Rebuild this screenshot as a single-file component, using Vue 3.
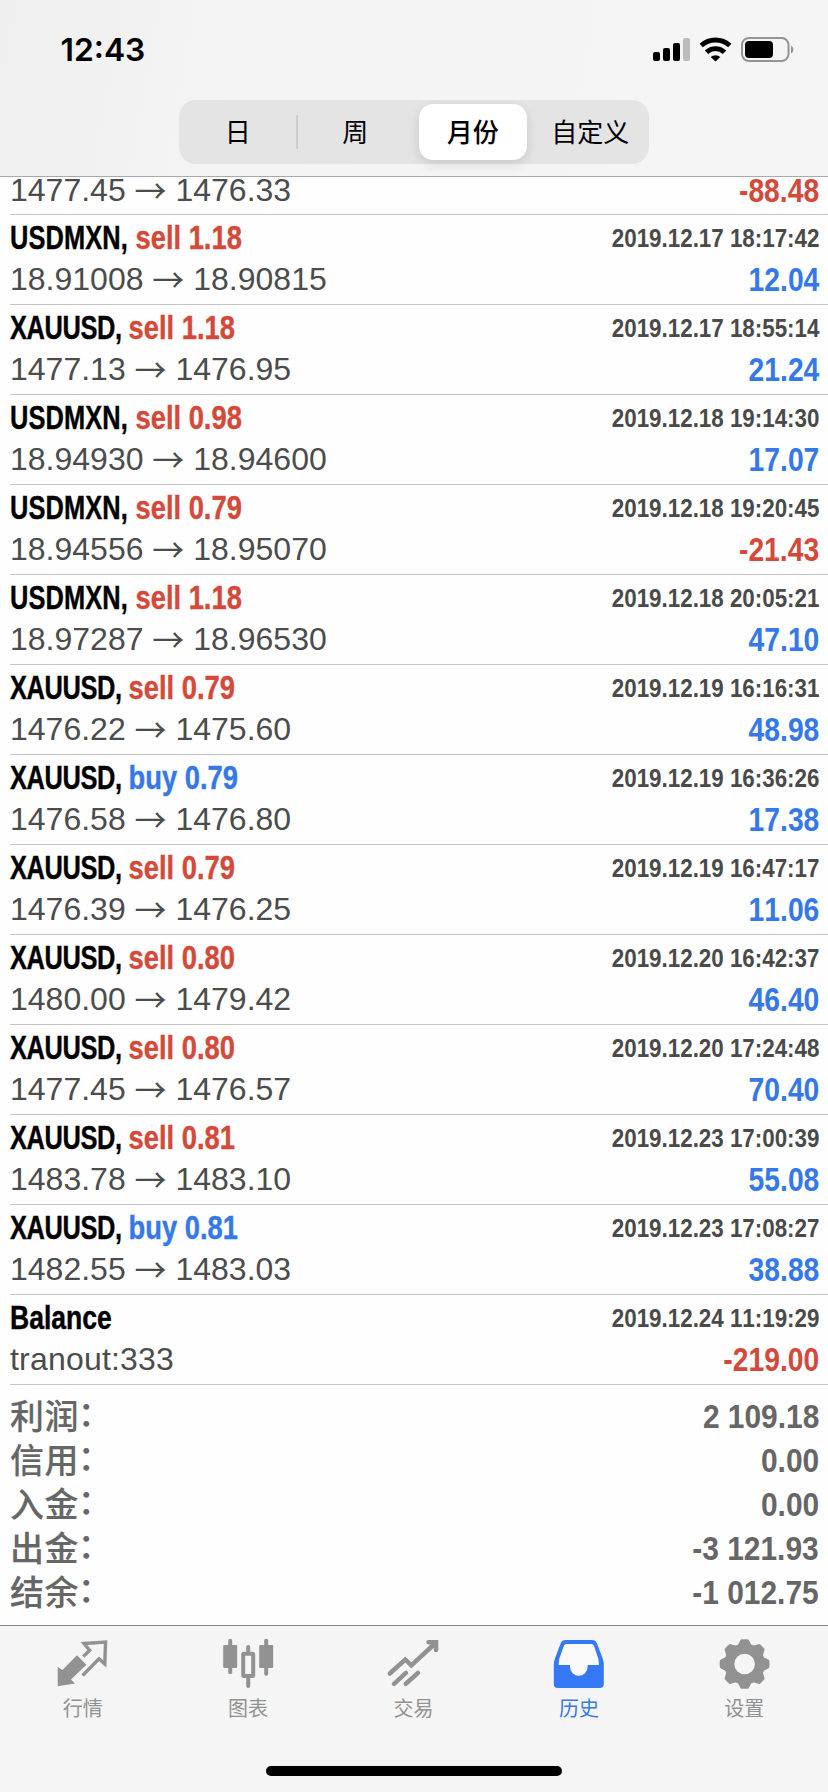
<script setup>
const segments = [
  { label: '日', divider: true },
  { label: '周' },
  { label: '月份', active: true },
  { label: '自定义' }
]

const deals = [
  { symbol: 'USDMXN', side: 'sell', volume: '1.18', open: '18.91008', close: '18.90815', time: '2019.12.17 18:17:42', profit: '12.04' },
  { symbol: 'XAUUSD', side: 'sell', volume: '1.18', open: '1477.13', close: '1476.95', time: '2019.12.17 18:55:14', profit: '21.24' },
  { symbol: 'USDMXN', side: 'sell', volume: '0.98', open: '18.94930', close: '18.94600', time: '2019.12.18 19:14:30', profit: '17.07' },
  { symbol: 'USDMXN', side: 'sell', volume: '0.79', open: '18.94556', close: '18.95070', time: '2019.12.18 19:20:45', profit: '-21.43' },
  { symbol: 'USDMXN', side: 'sell', volume: '1.18', open: '18.97287', close: '18.96530', time: '2019.12.18 20:05:21', profit: '47.10' },
  { symbol: 'XAUUSD', side: 'sell', volume: '0.79', open: '1476.22', close: '1475.60', time: '2019.12.19 16:16:31', profit: '48.98' },
  { symbol: 'XAUUSD', side: 'buy', volume: '0.79', open: '1476.58', close: '1476.80', time: '2019.12.19 16:36:26', profit: '17.38' },
  { symbol: 'XAUUSD', side: 'sell', volume: '0.79', open: '1476.39', close: '1476.25', time: '2019.12.19 16:47:17', profit: '11.06' },
  { symbol: 'XAUUSD', side: 'sell', volume: '0.80', open: '1480.00', close: '1479.42', time: '2019.12.20 16:42:37', profit: '46.40' },
  { symbol: 'XAUUSD', side: 'sell', volume: '0.80', open: '1477.45', close: '1476.57', time: '2019.12.20 17:24:48', profit: '70.40' },
  { symbol: 'XAUUSD', side: 'sell', volume: '0.81', open: '1483.78', close: '1483.10', time: '2019.12.23 17:00:39', profit: '55.08' },
  { symbol: 'XAUUSD', side: 'buy', volume: '0.81', open: '1482.55', close: '1483.03', time: '2019.12.23 17:08:27', profit: '38.88' }
]

const totals = [
  ['利润', '2 109.18'],
  ['信用', '0.00'],
  ['入金', '0.00'],
  ['出金', '-3 121.93'],
  ['结余', '-1 012.75']
]

const sign = (v) => (v.startsWith('-') ? 'red' : 'blue')

// Eight-tooth gear outline: each tooth is a valley-tip-tip-valley run.
const gear = Array.from({ length: 8 }, (_, i) =>
  [[-17, 18.8], [-6.5, 23.3], [6.5, 23.3], [17, 18.8]].map(([offset, r]) => {
    const a = ((i * 45 + offset) * Math.PI) / 180
    return `${(28.6 + r * Math.cos(a)).toFixed(2)},${(26 + r * Math.sin(a)).toFixed(2)}`
  }).join(' ')
).join(' ')
</script>

<template>
  <div class="screen">
    <header class="top">
      <div class="status">
        <span class="clock">12:43</span>
        <svg class="status-icons" width="144" height="26" viewBox="0 0 144 26">
          <rect x="1" y="15" width="7" height="9" rx="2" />
          <rect x="11" y="11" width="7" height="13" rx="2" />
          <rect x="21" y="6" width="7" height="18" rx="2" />
          <rect x="31" y="1" width="7" height="23" rx="2" fill="#bcbcbc" />
          <g fill="none" stroke="#000" stroke-width="4.8">
            <path d="M49.2 8.600a21 21 0 0 1 28.600 0" />
            <path d="M54.5 15.200a13 13 0 0 1 18 0" />
          </g>
          <path d="M58.7 20a7.200 7.200 0 0 1 9.600 0L63.500 24.500z" />
          <rect x="90" y="1" width="46.500" height="23" rx="7" fill="none" stroke="#949494" stroke-width="2" />
          <rect x="93" y="4" width="28" height="17" rx="4" />
          <path d="M139 8.500a4.500 4.500 0 0 1 0 8z" fill="#949494" />
        </svg>
      </div>
      <nav class="segmented">
        <div v-for="s in segments" :key="s.label" class="segment" :class="{ active: s.active, divider: s.divider }">
          <span>{{ s.label }}</span>
        </div>
      </nav>
    </header>

    <main class="list">
      <section class="deal partial">
        <div class="line second">
          <span class="price">1477.45 <i class="arrow">→</i> 1476.33</span>
          <span class="profit red">-88.48</span>
        </div>
      </section>
      <section v-for="d in deals" :key="d.time" class="deal">
        <div class="line first">
          <span class="title"><span :class="d.symbol.toLowerCase()">{{ d.symbol }}, </span><span class="side" :class="d.side === 'sell' ? 'red' : 'blue'">{{ d.side }} {{ d.volume }}</span></span>
          <span class="time">{{ d.time }}</span>
        </div>
        <div class="line second">
          <span class="price">{{ d.open }} <i class="arrow">→</i> {{ d.close }}</span>
          <span class="profit" :class="sign(d.profit)">{{ d.profit }}</span>
        </div>
      </section>
      <section class="deal">
        <div class="line first">
          <span class="title balance">Balance</span>
          <span class="time">2019.12.24 11:19:29</span>
        </div>
        <div class="line second">
          <span class="price note">tranout:333</span>
          <span class="profit red">-219.00</span>
        </div>
      </section>
      <section class="totals">
        <div v-for="[label, value] in totals" :key="label" class="total">
          <span class="label">{{ label }}<span class="colon">：</span></span>
          <span class="value">{{ value }}</span>
        </div>
      </section>
    </main>

    <footer class="tabs">
      <div class="tab">
        <svg width="56" height="52" viewBox="0 0 56 52">
          <path d="M2.700 28.700V48.300L20 45.500L16 41.500L31.400 26.700L22 17.300L7.400 32z" fill="currentColor" />
          <path d="M28.300 18.500L34.700 12.300L29 5.500L50.500 4L49.800 26L44 20.800L27.600 37.500" fill="none" stroke="currentColor" stroke-width="3.400" />
        </svg>
        <span>行情</span>
      </div>
      <div class="tab">
        <svg width="56" height="52" viewBox="0 0 56 52" fill="currentColor">
          <rect x="3.200" y="7" width="14" height="23" rx="1" />
          <rect x="8.200" y="0.700" width="4" height="35.600" rx="2" />
          <rect x="39.200" y="7" width="14" height="23" rx="1" />
          <rect x="44.200" y="0.700" width="4" height="37" rx="2" />
          <rect x="23.200" y="15.700" width="10" height="22.300" rx="0.500" fill="none" stroke="currentColor" stroke-width="4" />
          <rect x="26.200" y="7" width="4" height="8" rx="2" />
          <rect x="26.200" y="38" width="4" height="12" rx="2" />
        </svg>
        <span>图表</span>
      </div>
      <div class="tab">
        <svg width="56" height="52" viewBox="0 0 56 52" fill="none" stroke="currentColor" stroke-width="4.500" stroke-linecap="round">
          <path d="M4.800 35.500L20.300 21.500L26.300 27.300L50 5.500" />
          <path d="M43.500 4.300H51V12" />
          <path d="M9 45.800L21 34.900M20.800 45.800L33 34.900" />
        </svg>
        <span>交易</span>
      </div>
      <div class="tab current">
        <svg width="56" height="52" viewBox="0 0 56 52">
          <path d="M14.500 2H41Q44.500 2 45.800 5L51.500 20Q52.800 23.500 52.800 27V46Q52.800 50 48.800 50H6.800Q2.800 50 2.800 46V27Q2.800 23.500 4.100 20L9.800 5Q11 2 14.500 2z" fill="#3478f6" />
          <path d="M15.500 6H40.300Q42.200 6 43 8L47.400 21L48 27H36.600V29A8.800 8.800 0 0 1 19 29V27H7.600L8.200 21L12.800 8Q13.500 6 15.500 6z" fill="#f9f9fa" />
        </svg>
        <span>历史</span>
      </div>
      <div class="tab">
        <svg width="56" height="52" viewBox="0 0 56 52">
          <polygon :points="gear" fill="currentColor" stroke="currentColor" stroke-width="3.400" stroke-linejoin="round" />
          <circle cx="28.600" cy="26" r="10.300" fill="#f5f5f5" />
        </svg>
        <span>设置</span>
      </div>
      <div class="home"></div>
    </footer>
  </div>
</template>

<style>
body { background: #fff; }
</style>

<style scoped>
.screen { width: 828px; height: 1792px; display: flex; flex-direction: column; overflow: hidden; background: #fefefe; font-family: "Liberation Sans", "Noto Sans CJK SC", sans-serif; color: #000; box-sizing: border-box; }
.top { height: 177px; box-sizing: border-box; flex: none; border-bottom: 1px solid #a9a9a9; background: linear-gradient(100deg, #efeff0 0, #f4f4f5 28%, #f5f5f5 100%); }
.status { height: 100px; padding: 0 32px 0 60.500px; display: flex; justify-content: space-between; }
.clock { font: 600 31.800px/100px Inter, sans-serif; }
.status-icons { margin-top: 37px; }
.segmented { width: 470px; height: 64px; margin: 0 auto; display: grid; grid-template: 64px / repeat(4, 1fr); border-radius: 17px; background: #e4e4e5; }
.segment { position: relative; display: flex; align-items: center; justify-content: center; font-family: "Noto Sans CJK SC", sans-serif; font-size: 26px; line-height: 40px; }
.segment span { margin-top: -3px; }
.segment.divider::after { content: ""; position: absolute; right: -1px; top: 15px; width: 2px; height: 34px; background: #cdcdcf; }
.segment.active { margin: 4px 4.500px; border-radius: 14px; background: #fff; box-shadow: 0 4px 12px rgba(0, 0, 0, 0.12); font-weight: 500; }
.list { flex: 1; min-height: 0; }
.deal { height: 90px; box-sizing: border-box; margin-left: 10px; padding-right: 9px; border-bottom: 1px solid #c4c4c6; }
.deal.partial { height: 38px; display: flex; flex-direction: column; }
.partial .second { flex: none; margin-top: -5px; }
.line { display: flex; justify-content: space-between; white-space: pre; }
.first { height: 47px; line-height: 46px; }
.second { height: 42px; line-height: 36px; margin-top: -1px; }
.title { font-size: 33px; font-weight: 700; transform: scaleX(0.77); transform-origin: 0 50%; -webkit-text-stroke: 0.4px currentColor; }
.balance { transform: scaleX(0.805); }
.xauusd { letter-spacing: -0.5px; }
.usdmxn { letter-spacing: 0.15px; }
.side { display: inline-block; transform: scaleX(1.075); transform-origin: 0 50%; }
.time, .profit, .value { font-kerning: none; }
.time { font-size: 26px; font-weight: 700; color: #4a4a4a; line-height: 46px; transform: scaleX(0.86); transform-origin: 100% 50%; }
.price { font-size: 32px; color: #4c4c4c; }
.note { letter-spacing: 0.2px; }
.arrow { display: inline-block; height: 36px; vertical-align: top; font: normal 400 32px/34px "Noto Sans CJK SC", sans-serif; }
.profit { font-size: 32.5px; font-weight: 700; transform: scaleX(0.87); transform-origin: 100% 50%; line-height: 39px; }
.red { color: #d4493a; }
.blue { color: #3578ea; }
.totals { padding: 9px 9px 0 10px; }
.total { height: 44px; display: flex; justify-content: space-between; color: #666; }
.label { font: 500 34px/42px "Noto Sans CJK SC", sans-serif; letter-spacing: 0.4px; -webkit-text-stroke: 0.15px currentColor; }
.colon { display: inline-block; line-height: 36px; vertical-align: 3px; margin-left: -1px; }
.value { font-size: 34px; line-height: 45px; font-weight: 700; transform: scaleX(0.88); transform-origin: 100% 50%; }
.tabs { position: relative; height: 167px; box-sizing: border-box; padding-right: 1px; border-top: 1px solid #868686; background: #f5f5f5; display: grid; grid-template-columns: repeat(5, 1fr); flex: none; }
.tab { display: flex; flex-direction: column; align-items: center; padding-top: 12px; color: #929292; font: 20px/26px "Noto Sans CJK SC", sans-serif; }
.tab span { margin-top: 5px; }
.current { color: #3578ea; }
.home { position: absolute; left: 266px; bottom: 16px; width: 296px; height: 10px; border-radius: 5px; background: #000; }
</style>
